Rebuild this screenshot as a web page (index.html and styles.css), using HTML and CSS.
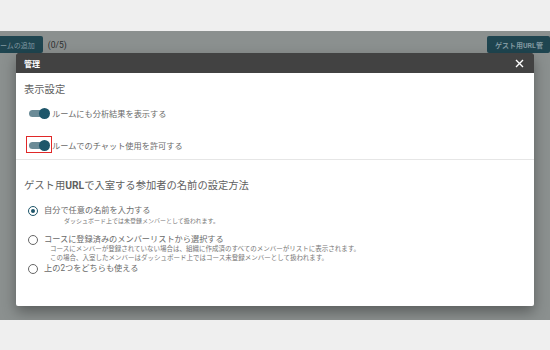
FILE: index.html
```html
<!DOCTYPE html>
<html lang="ja">
<head>
  <meta charset="UTF-8" />
  <title>管理</title>
  <link rel="stylesheet" href="styles.css">
</head>
<body>
  <div class="topo"></div>

  <div class="palco">
    <div class="barra">
      <div class="barra-esq">
        <span class="botao">ームの追加</span>
        <span class="contagem">(0/5)</span>
      </div>
      <span class="botao botao-dir">ゲスト用URL管</span>
    </div>

    <div class="modal">
      <div class="modal-cab">
        <span class="modal-titulo">管理</span>
        <svg class="fechar" width="9" height="9" viewBox="0 0 9 9">
          <path d="M1 1 L8 8 M8 1 L1 8" stroke="#fff" stroke-width="1.4" fill="none" />
        </svg>
      </div>

      <div class="secao">
        <h2>表示設定</h2>
        <div class="toggles">
          <div class="linha-toggle">
            <span class="toggle"><span class="bolinha"></span></span>
            <span>ルームにも分析結果を表示する</span>
          </div>
          <div class="linha-toggle">
            <span class="toggle destaque"><span class="bolinha"></span></span>
            <span>ルームでのチャット使用を許可する</span>
          </div>
        </div>
      </div>

      <div class="secao secao-2">
        <h2>ゲスト用<b>URL</b>で入室する参加者の名前の設定方法</h2>
        <div class="opcoes">
          <div class="opcao">
            <span class="radio marcado"></span>
            <div>
              <div class="rotulo">自分で任意の名前を入力する</div>
              <div class="nota nota-recuo">ダッシュボード上では未登録メンバーとして扱われます。</div>
            </div>
          </div>
          <div class="opcao">
            <span class="radio"></span>
            <div>
              <div class="rotulo">コースに登録済みのメンバーリストから選択する</div>
              <div class="nota">コースにメンバーが登録されていない場合は、組織に作成済のすべてのメンバーがリストに表示されます。</div>
              <div class="nota">この場合、入室したメンバーはダッシュボード上ではコース未登録メンバーとして扱われます。</div>
            </div>
          </div>
          <div class="opcao">
            <span class="radio"></span>
            <div>
              <div class="rotulo">上の2つをどちらも使える</div>
            </div>
          </div>
        </div>
      </div>
    </div>
  </div>
</body>
</html>
```

FILE: styles.css
```css
body {
  margin: 0;
  background-color: #efefef;
  font-family: Roboto, "Noto Sans CJK JP", sans-serif;
  color: #6a6a6a;
}
.topo {
  height: 31px;
}
.palco {
  position: relative;
  height: 289px;
  background-color: #8b908f;
}
.barra {
  display: flex;
  justify-content: space-between;
  padding-top: 5px;
}
.barra-esq {
  display: flex;
  align-items: center;
  gap: 5px;
}
.botao {
  display: flex;
  align-items: center;
  height: 17px;
  padding: 0 8px;
  background-color: #1f4550;
  color: #8199a1;
  font-size: 7px;
  border-radius: 2px;
}
.barra-esq .botao {
  padding-left: 0;
  border-radius: 0 2px 2px 0;
}
.contagem {
  color: #2c2f30;
  font-size: 8.5px;
}
.botao-dir {
  font-weight: bold;
  width: 47px;
  white-space: nowrap;
  overflow: hidden;
}
.modal {
  position: absolute;
  left: 16px;
  top: 22px;
  width: 518px;
  height: 253px;
  background-color: #fff;
  border-radius: 2px;
  box-shadow: 0 6px 14px rgba(0, 0, 0, 0.35);
  overflow: hidden;
}
.modal-cab {
  display: flex;
  justify-content: space-between;
  align-items: center;
  height: 20px;
  padding: 0 10px 0 8px;
  background-color: #424242;
  color: #fff;
}
.modal-titulo {
  font-size: 8px;
  font-weight: bold;
}
.secao {
  padding: 9px 8px 0 8px;
}
h2 {
  margin: 0;
  font-size: 10.3px;
  font-weight: normal;
  line-height: 15px;
  color: #5f5f5f;
}
h2 b {
  font-weight: bold;
}
.toggles {
  display: flex;
  flex-direction: column;
  gap: 12px;
  padding: 6px 0 4px 13px;
  border-bottom: 1px solid #e6e6e6;
  margin: 0 -8px;
}
.linha-toggle {
  display: flex;
  align-items: center;
  gap: 3px;
  height: 20px;
  font-size: 8.2px;
}
.toggle {
  position: relative;
  width: 20px;
  height: 7px;
  border-radius: 4px;
  background-color: #6b8b97;
}
.bolinha {
  position: absolute;
  right: -1px;
  top: -2px;
  width: 11px;
  height: 11px;
  border-radius: 50%;
  background-color: #1e566a;
}
.destaque::after {
  content: "";
  position: absolute;
  left: -3px;
  top: -6px;
  width: 24px;
  height: 15px;
  border: 1.5px solid #e02828;
}
.secao-2 {
  padding-top: 18px;
}
.opcoes {
  display: flex;
  flex-direction: column;
  padding: 12px 0 0 4px;
}
.opcao {
  display: flex;
  align-items: flex-start;
  gap: 6px;
  min-height: 29px;
}
.radio {
  box-sizing: border-box;
  width: 10px;
  height: 10px;
  margin-top: 1px;
  border: 1.2px solid #666;
  border-radius: 50%;
  flex-shrink: 0;
  position: relative;
}
.radio.marcado {
  border-color: #1e566a;
}
.radio.marcado::after {
  content: "";
  position: absolute;
  left: 1.5px;
  top: 1.5px;
  width: 4.6px;
  height: 4.6px;
  border-radius: 50%;
  background-color: #1e566a;
}
.rotulo {
  font-size: 8.2px;
  line-height: 11px;
}
.nota {
  font-size: 6.5px;
  line-height: 9px;
  color: #777;
  padding-left: 6px;
}
.nota-recuo {
  font-size: 6px;
  padding-left: 20px;
}
```
